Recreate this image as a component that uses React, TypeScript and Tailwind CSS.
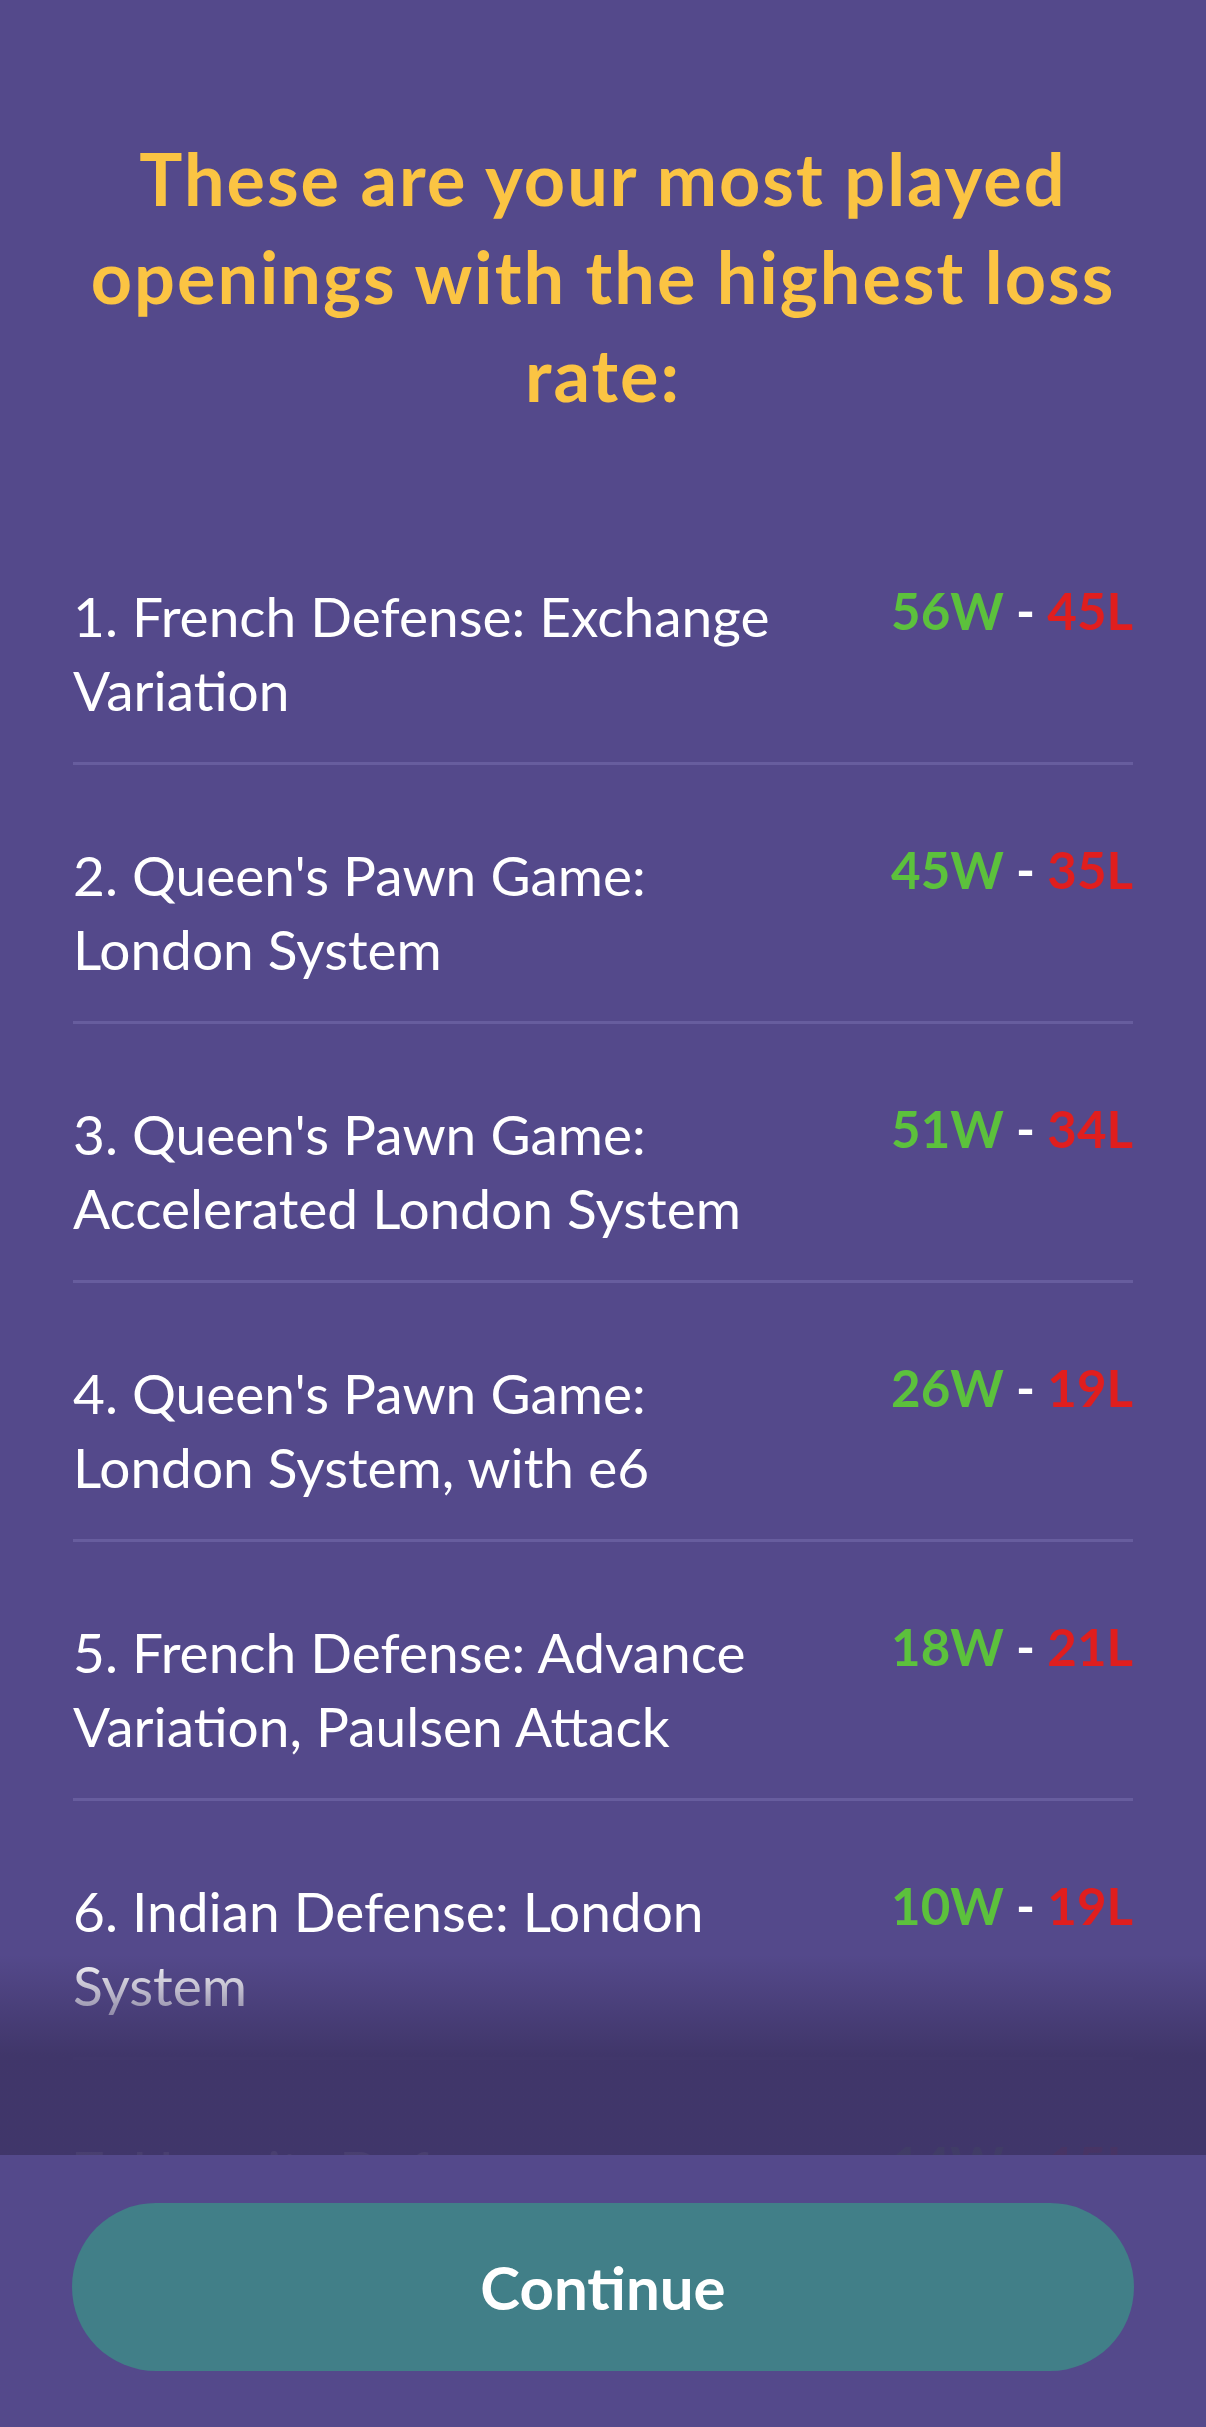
import React from "react";

const openings = [
  { lines: ["1. French Defense: Exchange", "Variation"], w: 56, l: 45 },
  { lines: ["2. Queen's Pawn Game:", "London System"], w: 45, l: 35 },
  { lines: ["3. Queen's Pawn Game:", "Accelerated London System"], w: 51, l: 34 },
  { lines: ["4. Queen's Pawn Game:", "London System, with e6"], w: 26, l: 19 },
  { lines: ["5. French Defense: Advance", "Variation, Paulsen Attack"], w: 18, l: 21 },
  { lines: ["6. Indian Defense: London", "System"], w: 10, l: 19 },
  { lines: ["7. Horwitz Defense", ""], w: 14, l: 15 },
];

function OpeningRow({ lines, w, l }: { lines: string[]; w: number; l: number }) {
  return (
    <div className="flex items-start justify-between gap-8 border-b-[3px] border-[#675d9e] pt-[73px] pb-[35px]">
      <div className="text-[55px] leading-[74px] text-white">
        {lines.map((line, i) => (
          <div key={i} className="whitespace-nowrap">
            {line || "\u00a0"}
          </div>
        ))}
      </div>
      <div className="whitespace-nowrap text-[51px] leading-[64px] font-bold">
        <span className="text-[#5cc13c]">{w}W</span>
        <span className="text-white"> - </span>
        <span className="text-[#e01e1e]">{l}L</span>
      </div>
    </div>
  );
}

export default function App() {
  return (
    <div
      className="flex h-[2427px] w-full flex-col bg-[#54498b]"
      style={{ fontFamily: "Lato, 'Noto Sans', sans-serif" }}
    >
      <div className="relative flex-1 overflow-hidden">
        <div className="px-[73px] pt-[129px]">
          <h1 className="text-center text-[72px] leading-[98px] font-bold tracking-[2px] text-[#fbc443]">
            These are your most played openings with the highest loss rate:
          </h1>
          <div className="mt-[83px]">
            {openings.map((o, i) => (
              <OpeningRow key={i} {...o} />
            ))}
          </div>
        </div>
        <div className="pointer-events-none absolute inset-x-0 bottom-0 h-[200px] bg-gradient-to-b from-[#3f3568]/0 via-[#3f3568]/95 via-50% to-[#3f3568]/95" />
      </div>
      <div className="px-[72px] pt-[48px] pb-[56px]">
        <button className="flex h-[168px] w-full items-center justify-center rounded-full bg-[#417f88] text-[60px] font-bold text-white">
          Continue
        </button>
      </div>
    </div>
  );
}
